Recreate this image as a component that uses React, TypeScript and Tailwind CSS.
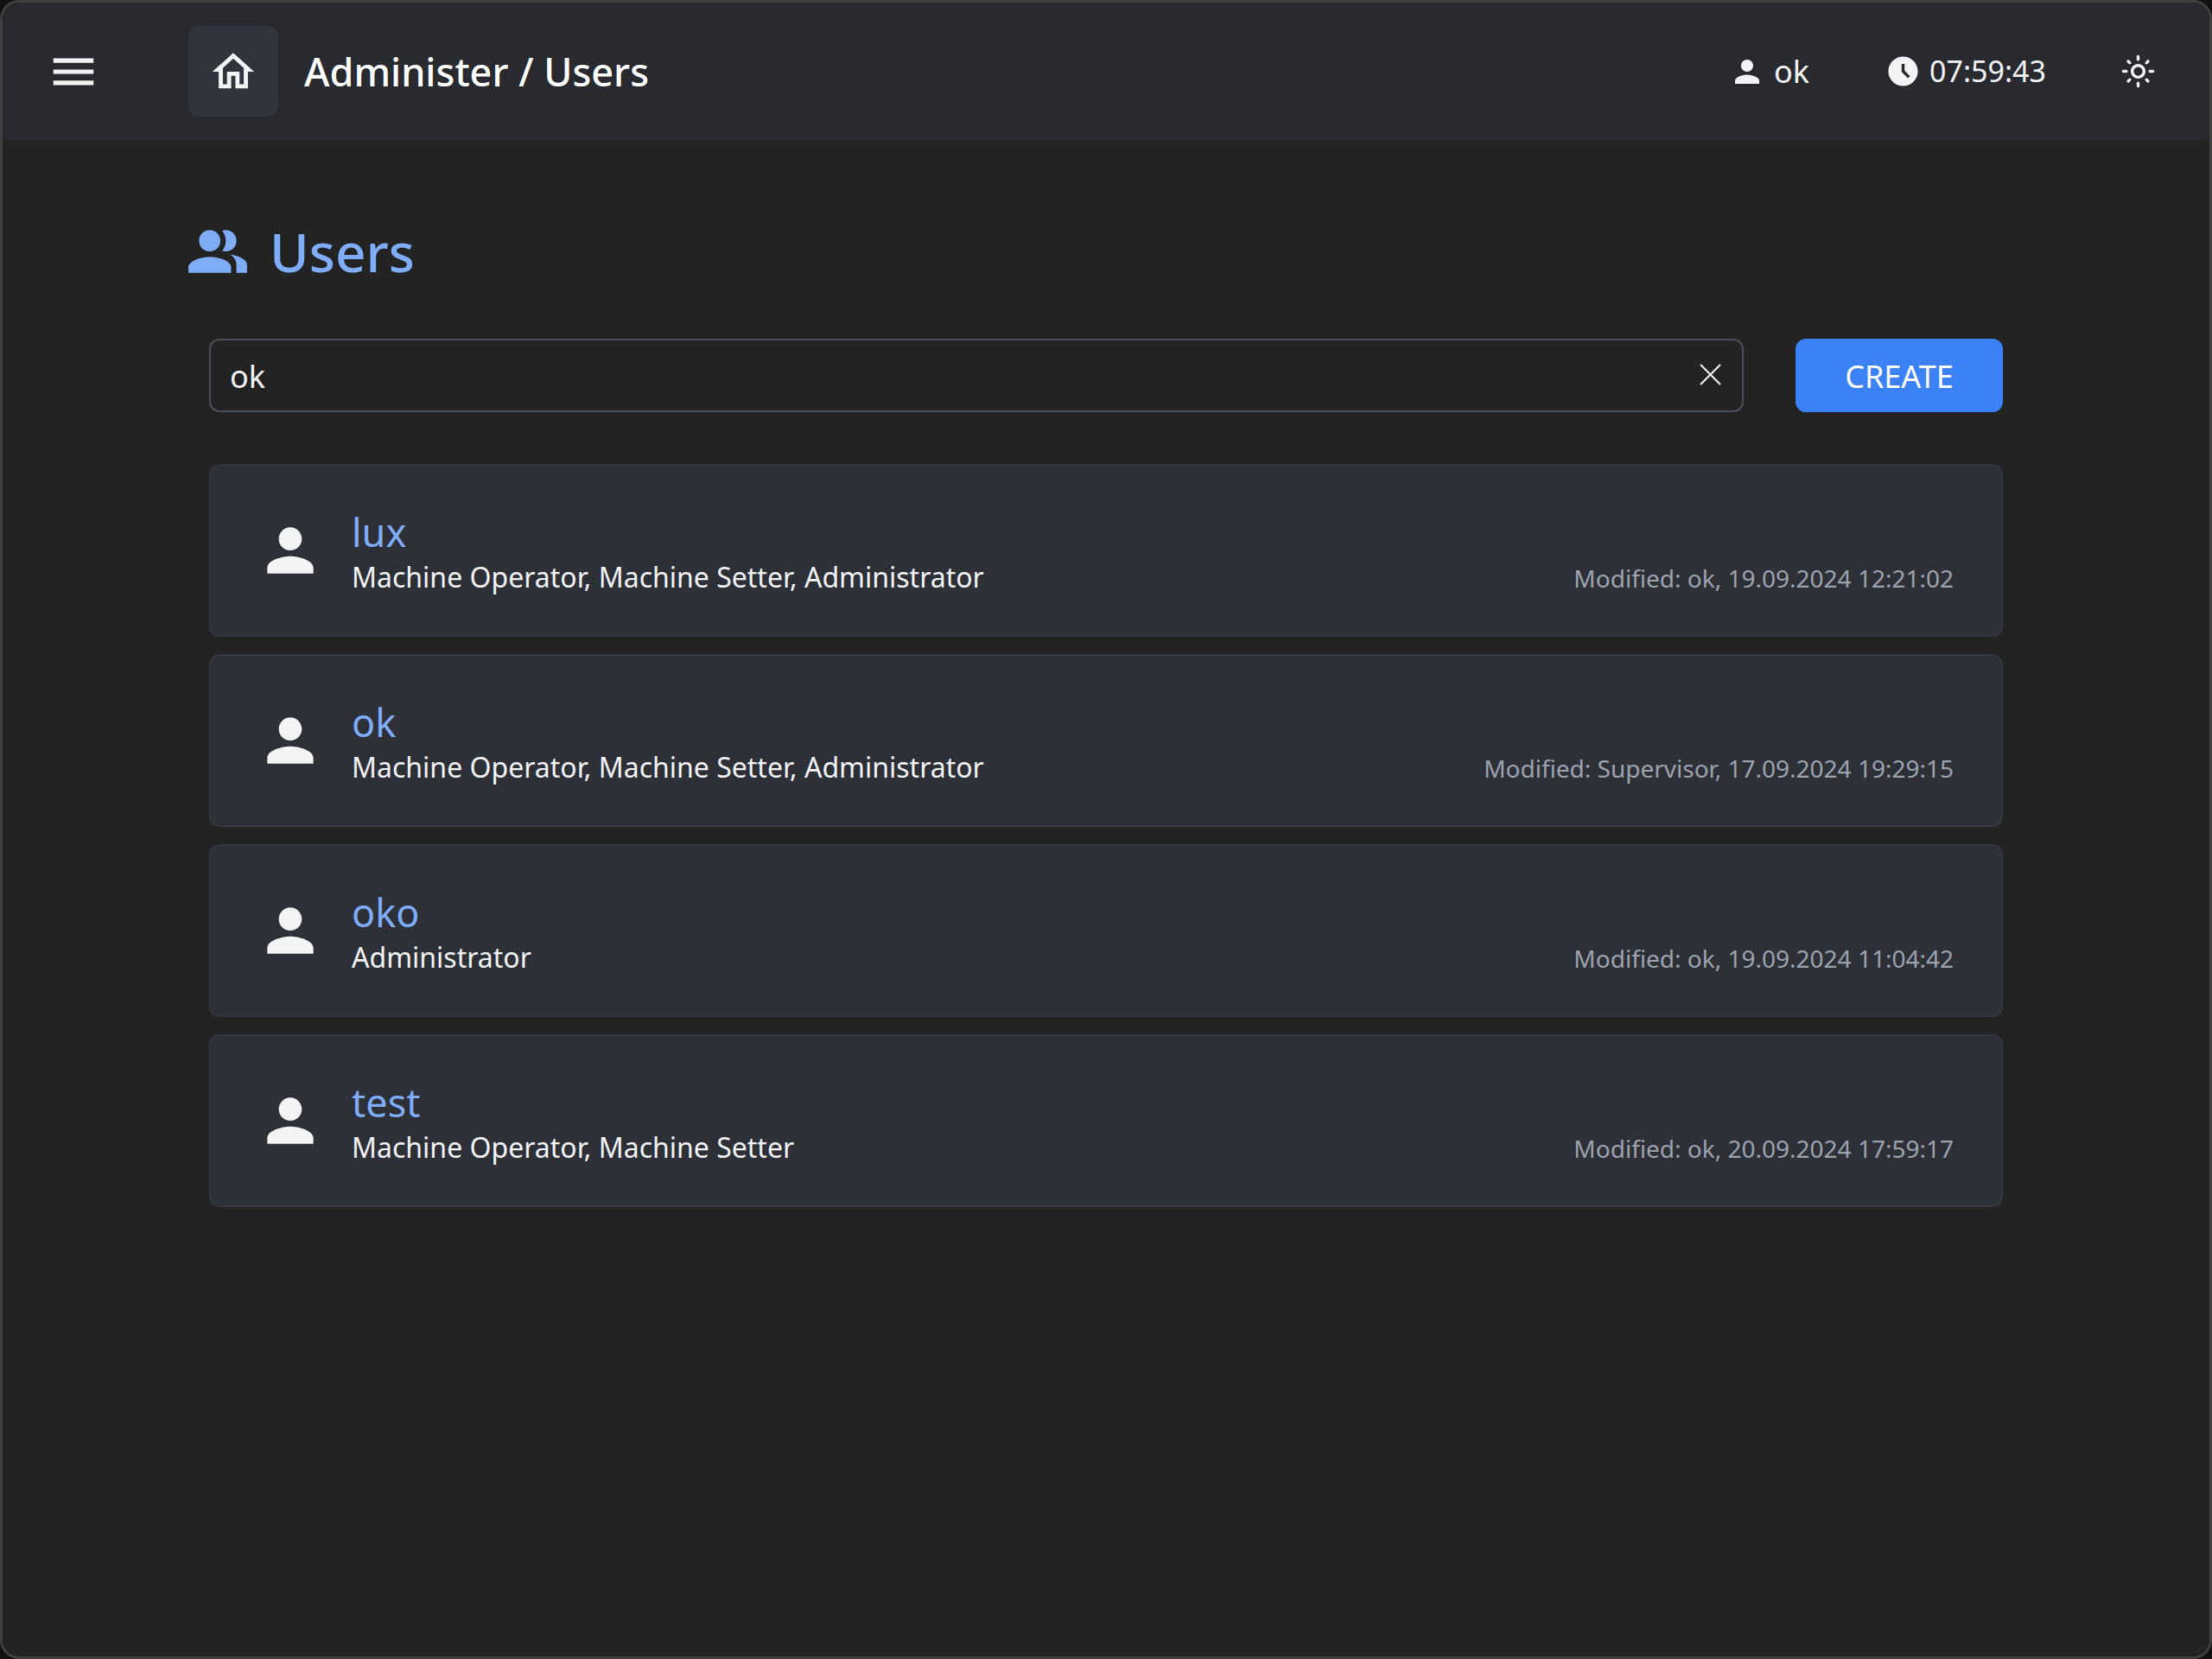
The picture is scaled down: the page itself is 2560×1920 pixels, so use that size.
const users = [
  { name: 'lux', roles: 'Machine Operator, Machine Setter, Administrator', modified: 'Modified: ok, 19.09.2024 12:21:02' },
  { name: 'ok', roles: 'Machine Operator, Machine Setter, Administrator', modified: 'Modified: Supervisor, 17.09.2024 19:29:15' },
  { name: 'oko', roles: 'Administrator', modified: 'Modified: ok, 19.09.2024 11:04:42' },
  { name: 'test', roles: 'Machine Operator, Machine Setter', modified: 'Modified: ok, 20.09.2024 17:59:17' },
];

const PERSON = 'M12 12c2.21 0 4-1.79 4-4s-1.79-4-4-4-4 1.79-4 4 1.79 4 4 4zm0 2c-2.67 0-8 1.34-8 4v2h16v-2c0-2.66-5.33-4-8-4z';

function Icon({ d, className }: { d: string; className: string }) {
  return (
    <svg viewBox="0 0 24 24" fill="currentColor" className={className}>
      <path d={d} />
    </svg>
  );
}

function Header() {
  return (
    <header className="flex h-[159px] shrink-0 items-center bg-[#292a2f] pr-[62px] text-[#f3f4f6]">
      <Icon d="M3 18h18v-2H3v2zm0-5h18v-2H3v2zm0-7v2h18V6H3z" className="ml-[51px] h-[62px] w-[62px]" />
      <div className="ml-[102px] flex h-[105px] w-[104px] items-center justify-center rounded-xl bg-[#30343d]">
        <Icon d="m12 5.69 5 4.5V18h-2v-6H9v6H7v-7.81l5-4.5M12 3 2 12h3v8h6v-6h2v6h6v-8h3L12 3z" className="h-[58px] w-[58px]" />
      </div>
      <h1 className="ml-[30px] text-[45px] font-medium text-white">Administer / Users</h1>
      <div className="ml-auto flex items-center text-[36px]">
        <Icon d={PERSON} className="h-[42px] w-[42px]" />
        <span className="ml-[10px]">ok</span>
        <Icon
          d="M11.99 2C6.47 2 2 6.48 2 12s4.47 10 9.99 10C17.52 22 22 17.52 22 12S17.52 2 11.99 2zm3.3 14.71L11 12.41V7h2v4.59l3.71 3.71-1.42 1.41z"
          className="ml-[88px] h-[41px] w-[41px]"
        />
        <span className="ml-[10px] text-[34px]">07:59:43</span>
        <Icon
          d="M12 9c1.65 0 3 1.35 3 3s-1.35 3-3 3-3-1.35-3-3 1.35-3 3-3m0-2c-2.76 0-5 2.24-5 5s2.24 5 5 5 5-2.24 5-5-2.24-5-5-5zM2 13h2c.55 0 1-.45 1-1s-.45-1-1-1H2c-.55 0-1 .45-1 1s.45 1 1 1zm18 0h2c.55 0 1-.45 1-1s-.45-1-1-1h-2c-.55 0-1 .45-1 1s.45 1 1 1zM11 2v2c0 .55.45 1 1 1s1-.45 1-1V2c0-.55-.45-1-1-1s-1 .45-1 1zm0 18v2c0 .55.45 1 1 1s1-.45 1-1v-2c0-.55-.45-1-1-1s-1 .45-1 1zM5.99 4.58c-.39-.39-1.03-.39-1.41 0-.39.39-.39 1.03 0 1.41l1.06 1.06c.39.39 1.03.39 1.41 0s.39-1.03 0-1.41L5.99 4.58zm12.37 12.37c-.39-.39-1.03-.39-1.41 0-.39.39-.39 1.03 0 1.41l1.06 1.06c.39.39 1.03.39 1.41 0 .39-.39.39-1.03 0-1.41l-1.06-1.06zm1.06-10.96c.39-.39.39-1.03 0-1.41-.39-.39-1.03-.39-1.41 0l-1.06 1.06c-.39.39-.39 1.03 0 1.41s1.03.39 1.41 0l1.06-1.06zM7.05 18.36c.39-.39.39-1.03 0-1.41-.39-.39-1.03-.39-1.41 0l-1.06 1.06c-.39.39-.39 1.03 0 1.41s1.03.39 1.41 0l1.06-1.06z"
          className="ml-[86px] h-[41px] w-[41px]"
        />
      </div>
    </header>
  );
}

function UserCard({ name, roles, modified }: { name: string; roles: string; modified: string }) {
  return (
    <div className="flex h-[200px] items-center rounded-xl border-2 border-[#333640] bg-[#2e3038] pl-[52px] pr-[55px]">
      <Icon d={PERSON} className="h-[80px] w-[80px] text-[#f3f4f6]" />
      <div className="ml-[31px] pt-[3px]">
        <div className="text-[45px] leading-[58px] text-[#7fadf8]">{name}</div>
        <div className="text-[32px] leading-[46px] text-[#f3f4f6]">{roles}</div>
      </div>
      <div className="ml-auto self-end pb-[44px] text-[28px] leading-[44px] text-[#9ca3af]">{modified}</div>
    </div>
  );
}

export default function App() {
  return (
    <div className="h-[1920px] w-[2560px] bg-[#111111] font-['Noto_Sans',sans-serif]">
      <div className="flex h-full flex-col overflow-hidden rounded-[22px] border-[3px] border-[#404040] bg-[#232323]">
        <Header />
        <main className="pl-[212px] pr-[239px]">
          <div className="mt-[94px] flex h-[70px] items-center text-[#7fadf8]">
            <Icon
              d="M16.67 13.13C18.04 14.06 19 15.32 19 17v3h4v-3c0-2.18-3.57-3.47-6.33-3.87zM15 12c2.21 0 4-1.79 4-4s-1.79-4-4-4c-.47 0-.91.1-1.33.24C14.5 5.27 15 6.58 15 8s-.5 2.73-1.33 3.76c.42.14.86.24 1.33.24zM9 12c2.21 0 4-1.79 4-4s-1.79-4-4-4-4 1.79-4 4 1.79 4 4 4zm0 2c-2.67 0-8 1.34-8 4v2h16v-2c0-2.66-5.33-4-8-4z"
              className="h-[74px] w-[74px]"
            />
            <h2 className="ml-[23px] text-[62px] font-medium">Users</h2>
          </div>
          <div className="ml-[27px] mt-[66px] flex gap-[60px]">
            <div className="flex h-[85px] flex-1 items-center rounded-xl border-2 border-[#4b4f5a] pb-[0px] pl-[22px] pr-[24px] text-[36px] text-[#f3f4f6]">
              <span className="pt-[2px]">ok</span>
              <svg viewBox="0 0 24 24" stroke="currentColor" strokeWidth="2" className="mb-[2px] ml-auto h-[25px] w-[25px]">
                <path d="M1 1l22 22M23 1L1 23" />
              </svg>
            </div>
            <button className="flex h-[85px] w-[240px] items-center justify-center rounded-xl bg-[#3b82f6] pt-[2px] text-[36px] text-white">CREATE</button>
          </div>
          <div className="ml-[27px] mt-[60px] flex flex-col gap-[20px]">
            {users.map((user) => (
              <UserCard key={user.name} {...user} />
            ))}
          </div>
        </main>
      </div>
    </div>
  );
}
